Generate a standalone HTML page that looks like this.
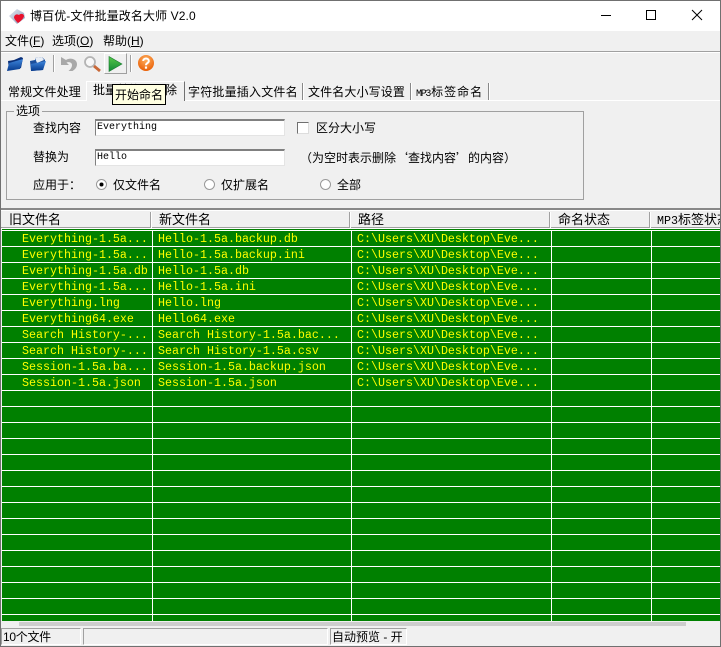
<!DOCTYPE html>
<html><head><meta charset="utf-8"><style>
html,body{margin:0;padding:0}
body{width:721px;height:647px;overflow:hidden;position:relative;background:#f0f0f0;font-family:"Liberation Sans","WenQuanYi Zen Hei","Noto Sans CJK SC",sans-serif;font-size:12px;color:#000}
.a{position:absolute}
.t{position:absolute;white-space:nowrap;line-height:16px;height:16px}
.c{font-family:"WenQuanYi Zen Hei","Noto Sans CJK SC",sans-serif}
.hd{font-size:13px}
.m{font-family:"Liberation Mono","WenQuanYi Zen Hei",monospace}
.d{position:absolute;white-space:nowrap;font-family:"Liberation Mono",monospace;font-size:11.67px;line-height:16px;color:#ff0}
.sep{position:absolute;top:83px;height:17px;width:1px;background:#888;box-shadow:1px 0 0 #fff}
.h{position:absolute;left:2px;width:719px;height:1px;background:#fff}
.v{position:absolute;top:230px;height:391px;width:1px;background:#fff}
.hs{position:absolute;top:212px;height:16px;width:1px;background:#a0a0a0;box-shadow:1px 0 0 #fff}
.st{position:absolute;top:628px;height:17px;border:1px solid;border-color:#a0a0a0 #fff #fff #a0a0a0;box-sizing:border-box}
.inp{position:absolute;left:95px;width:190px;height:17px;background:#fff;box-sizing:border-box;border:1px solid;border-color:#808080 #e4e4e4 #e4e4e4 #808080;border-top-width:2px}
</style></head><body>
<!-- title bar -->
<div class="a" style="left:0;top:0;width:721px;height:31px;background:#fff"></div>
<svg class="a" style="left:8px;top:7px" width="18" height="18" viewBox="0 0 18 18"><defs><linearGradient id="g0" x1="0" y1="0" x2="1" y2="1"><stop offset="0" stop-color="#e4e8f0"/><stop offset="1" stop-color="#8a98b8"/></linearGradient></defs><path d="M1 9L9 2l7 4 1 5-8 6z" fill="url(#g0)"/><path d="M6 10c1-3 3-3 5-2 2-2 5-1 5 1 0 2-4 6-6 7-2-2-4-4-4-6z" fill="#e8102c"/></svg>
<div class="t" style="left:30px;top:8px;letter-spacing:.1px;line-height:17px">博百优-文件批量改名大师 V2.0</div>
<svg class="a" style="left:600px;top:8px" width="110" height="14" viewBox="0 0 110 14"><path d="M1 7.500H11" stroke="#000" fill="none"/><rect x="46.500" y="2.500" width="9" height="9" fill="none" stroke="#000"/><path d="M92 2l10 10M102 2L92 12" stroke="#000" fill="none"/></svg>
<!-- menu -->
<div class="t" style="left:5px;top:33px">文件(<u>F</u>)</div>
<div class="t" style="left:52px;top:33px">选项(<u>O</u>)</div>
<div class="t" style="left:103px;top:33px">帮助(<u>H</u>)</div>
<div class="a" style="left:0;top:51px;width:721px;height:1px;background:#a0a0a0"></div>
<div class="a" style="left:0;top:52px;width:721px;height:1px;background:#fff"></div>
<!-- toolbar -->
<svg class="a" style="left:6px;top:55px" width="18" height="18" viewBox="0 0 18 18"><defs><linearGradient id="g1" x1="0" y1="0" x2="0" y2="1"><stop offset="0" stop-color="#3f86dc"/><stop offset="1" stop-color="#073a8c"/></linearGradient></defs><path d="M2 6l6-1 7-3 2 1-2 10-12 2z" fill="#0a2f78"/><path d="M3 8l14-4-3 10-13 2z" fill="url(#g1)"/></svg>
<svg class="a" style="left:29px;top:55px" width="18" height="18" viewBox="0 0 18 18"><path d="M1 6l5-1 0-2 7-1 3 3 0 2-2 8-12 1z" fill="#1c4f9c"/><path d="M6 3l7-1 2 3-7 3z" fill="#e8eef6"/><path d="M2 9l15-3-3 9-12 1z" fill="url(#g1)"/></svg>
<div class="a" style="left:53px;top:55px;width:1px;height:17px;background:#a0a0a0;box-shadow:1px 0 0 #fff"></div>
<svg class="a" style="left:60px;top:55px" width="18" height="18" viewBox="0 0 18 18"><path d="M1 2v8h8L6.500 7.500C9 6.500 12 7.500 12 10c0 2-1 4-3.500 6h4c3-2 4.500-4 4.500-7 0-5-7-7-11-4z" fill="#a8a8a8"/></svg>
<svg class="a" style="left:83px;top:55px" width="18" height="18" viewBox="0 0 18 18"><circle cx="7" cy="7" r="5" fill="#f8f8f8" stroke="#b4b4b4" stroke-width="1.800"/><path d="M11 11l6 5" stroke="#c86838" stroke-width="2.800" fill="none"/></svg>
<div class="a" style="left:104px;top:53px;width:23px;height:21px;box-sizing:border-box;border:1px solid;border-color:#fff #a0a0a0 #a0a0a0 #fff"></div>
<svg class="a" style="left:107px;top:56px" width="16" height="16" viewBox="0 0 16 16"><defs><linearGradient id="g2" x1="0" y1="0" x2="0" y2="1"><stop offset="0" stop-color="#58c848"/><stop offset="1" stop-color="#108a38"/></linearGradient></defs><path d="M2 0.500L15 8 2 15.500z" fill="url(#g2)" stroke="#187a30" stroke-width=".6"/></svg>
<div class="a" style="left:130px;top:55px;width:1px;height:17px;background:#a0a0a0;box-shadow:1px 0 0 #fff"></div>
<svg class="a" style="left:137px;top:54px" width="18" height="18" viewBox="0 0 18 18"><defs><radialGradient id="g3" cx=".5" cy=".3" r=".75"><stop offset="0" stop-color="#ffb060"/><stop offset="1" stop-color="#e85a00"/></radialGradient></defs><circle cx="9" cy="9" r="8" fill="url(#g3)"/><path d="M6.200 7c0-3.300 5.600-3.300 5.600 0 0 2.200-2.800 2-2.800 4.200" stroke="#fff" stroke-width="2" fill="none"/><rect x="7.900" y="12.500" width="2.200" height="2.200" fill="#fff"/></svg>
<!-- tabs -->
<div class="a" style="left:0;top:100px;width:721px;height:1px;background:#fff"></div>
<div class="t" style="left:8px;top:84px;letter-spacing:.15px">常规文件处理</div>
<div class="a" style="left:86px;top:81px;width:99px;height:20px;background:#f0f0f0;border-top:1px solid #fff;border-right:1px solid #707070;border-left:1px solid #fff;box-sizing:border-box"></div>
<div class="t" style="left:93px;top:82px">批量替换与删除</div>
<div class="sep" style="left:302px"></div>
<div class="t" style="left:188px;top:84px;letter-spacing:.2px">字符批量插入文件名</div>
<div class="sep" style="left:410px"></div>
<div class="t" style="left:308px;top:84px;letter-spacing:.12px">文件名大小写设置</div>
<div class="sep" style="left:488px"></div>
<div class="t" style="left:416px;top:84px"><span class="m" style="font-size:10px;letter-spacing:-1.300px">MP3</span><span style="margin-left:1px;letter-spacing:1px">标签命名</span></div>
<!-- tooltip -->
<div class="a" style="left:112px;top:84px;width:54px;height:21px;background:#ffffe1;border:1px solid #000;box-sizing:border-box"></div>
<div class="t" style="left:115px;top:87px">开始命名</div>
<!-- options group -->
<div class="a" style="left:6px;top:111px;width:578px;height:89px;border:1px solid #a0a0a0;box-sizing:border-box"></div>
<div class="t" style="left:14px;top:103px;background:#f0f0f0;padding:0 2px;">选项</div>
<div class="t" style="left:33px;top:120px">查找内容</div>
<div class="t" style="left:33px;top:149px">替换为</div>
<div class="t c" style="left:33px;top:177px">应用于：</div>
<div class="inp" style="top:119px"></div>
<div class="inp" style="top:149px"></div>
<div class="d" style="left:97px;top:120px;color:#000;font-size:10px;">Everything</div>
<div class="d" style="left:97px;top:150px;color:#000;font-size:10px;">Hello</div>
<div class="a" style="left:297px;top:122px;width:12px;height:12px;background:#fff;box-sizing:border-box;border:1px solid;border-color:#707070 #ddd #ddd #707070"></div>
<div class="t" style="left:316px;top:120px">区分大小写</div>
<div class="t c" style="left:300px;top:150px">（为空时表示删除‘查找内容’的内容）</div>
<svg class="a" style="left:95px;top:178px" width="13" height="13"><circle cx="6.500" cy="6.500" r="5" fill="#fff" stroke="#999"/><circle cx="6.500" cy="6.500" r="2" fill="#000"/></svg>
<svg class="a" style="left:203px;top:178px" width="13" height="13"><circle cx="6.500" cy="6.500" r="5" fill="#fff" stroke="#999"/></svg>
<svg class="a" style="left:319px;top:178px" width="13" height="13"><circle cx="6.500" cy="6.500" r="5" fill="#fff" stroke="#999"/></svg>
<div class="t" style="left:113px;top:177px">仅文件名</div>
<div class="t" style="left:221px;top:177px">仅扩展名</div>
<div class="t" style="left:337px;top:177px">全部</div>
<!-- list -->
<div class="a" style="left:0;top:208px;width:721px;height:2px;background:#888"></div>
<div class="a" style="left:0;top:210px;width:721px;height:1px;background:#fff"></div>
<div class="a" style="left:0;top:227px;width:721px;height:1px;background:#a0a0a0"></div>
<div class="a" style="left:0;top:228px;width:721px;height:1px;background:#fff"></div>
<div class="a" style="left:2px;top:229px;width:719px;height:392px;background:#008000"></div>
<div class="h" style="top:230px"></div>
<div class="hs" style="left:150px"></div><div class="hs" style="left:349px"></div><div class="hs" style="left:549px"></div><div class="hs" style="left:649px"></div>
<div class="t hd" style="left:9px;top:212px">旧文件名</div>
<div class="t hd" style="left:159px;top:212px">新文件名</div>
<div class="t hd" style="left:358px;top:212px">路径</div>
<div class="t hd" style="left:558px;top:212px">命名状态</div>
<div class="a" style="left:657px;top:212px;width:63px;overflow:hidden;height:16px"><div class="t hd" style="left:0;top:0"><span class="m" style="font-size:11.67px">MP3</span>标签状态</div></div>
<div class="h" style="top:246px"></div><div class="h" style="top:262px"></div><div class="h" style="top:278px"></div><div class="h" style="top:294px"></div><div class="h" style="top:310px"></div><div class="h" style="top:326px"></div><div class="h" style="top:342px"></div><div class="h" style="top:358px"></div><div class="h" style="top:374px"></div><div class="h" style="top:390px"></div><div class="h" style="top:406px"></div><div class="h" style="top:422px"></div><div class="h" style="top:438px"></div><div class="h" style="top:454px"></div><div class="h" style="top:470px"></div><div class="h" style="top:486px"></div><div class="h" style="top:502px"></div><div class="h" style="top:518px"></div><div class="h" style="top:534px"></div><div class="h" style="top:550px"></div><div class="h" style="top:566px"></div><div class="h" style="top:582px"></div><div class="h" style="top:598px"></div><div class="h" style="top:614px"></div>
<div class="v" style="left:152px"></div><div class="v" style="left:351px"></div><div class="v" style="left:551px"></div><div class="v" style="left:651px"></div>
<div class="d" style="left:22px;top:231px">Everything-1.5a...</div><div class="d" style="left:158px;top:231px">Hello-1.5a.backup.db</div><div class="d" style="left:357px;top:231px">C:\Users\XU\Desktop\Eve...</div>
<div class="d" style="left:22px;top:247px">Everything-1.5a...</div><div class="d" style="left:158px;top:247px">Hello-1.5a.backup.ini</div><div class="d" style="left:357px;top:247px">C:\Users\XU\Desktop\Eve...</div>
<div class="d" style="left:22px;top:263px">Everything-1.5a.db</div><div class="d" style="left:158px;top:263px">Hello-1.5a.db</div><div class="d" style="left:357px;top:263px">C:\Users\XU\Desktop\Eve...</div>
<div class="d" style="left:22px;top:279px">Everything-1.5a...</div><div class="d" style="left:158px;top:279px">Hello-1.5a.ini</div><div class="d" style="left:357px;top:279px">C:\Users\XU\Desktop\Eve...</div>
<div class="d" style="left:22px;top:295px">Everything.lng</div><div class="d" style="left:158px;top:295px">Hello.lng</div><div class="d" style="left:357px;top:295px">C:\Users\XU\Desktop\Eve...</div>
<div class="d" style="left:22px;top:311px">Everything64.exe</div><div class="d" style="left:158px;top:311px">Hello64.exe</div><div class="d" style="left:357px;top:311px">C:\Users\XU\Desktop\Eve...</div>
<div class="d" style="left:22px;top:327px">Search History-...</div><div class="d" style="left:158px;top:327px">Search History-1.5a.bac...</div><div class="d" style="left:357px;top:327px">C:\Users\XU\Desktop\Eve...</div>
<div class="d" style="left:22px;top:343px">Search History-...</div><div class="d" style="left:158px;top:343px">Search History-1.5a.csv</div><div class="d" style="left:357px;top:343px">C:\Users\XU\Desktop\Eve...</div>
<div class="d" style="left:22px;top:359px">Session-1.5a.ba...</div><div class="d" style="left:158px;top:359px">Session-1.5a.backup.json</div><div class="d" style="left:357px;top:359px">C:\Users\XU\Desktop\Eve...</div>
<div class="d" style="left:22px;top:375px">Session-1.5a.json</div><div class="d" style="left:158px;top:375px">Session-1.5a.json</div><div class="d" style="left:357px;top:375px">C:\Users\XU\Desktop\Eve...</div>
<!-- scrollbar -->
<div class="a" style="left:19px;top:622px;width:667px;height:4px;background:#cdcdcd"></div>
<!-- status -->
<div class="st" style="left:1px;width:80px"></div>
<div class="st" style="left:83px;width:245px"></div>
<div class="st" style="left:330px;width:77px"></div>
<div class="t" style="left:3px;top:629px;letter-spacing:-.3px">10个文件</div>
<div class="t" style="left:332px;top:629px">自动预览 - 开</div>
<!-- window border -->
<div class="a" style="left:0;top:0;width:721px;height:1px;background:#707070"></div>
<div class="a" style="left:0;top:0;width:1px;height:647px;background:#707070"></div>
<div class="a" style="left:720px;top:0;width:1px;height:647px;background:#707070"></div>
<div class="a" style="left:0;top:646px;width:721px;height:1px;background:#707070"></div>
</body></html>
